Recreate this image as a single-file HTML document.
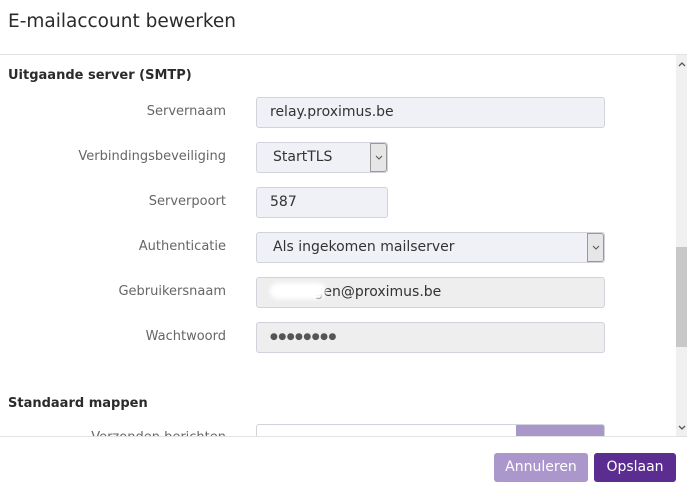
<!DOCTYPE html>
<html><head><meta charset="utf-8"><style>
*{box-sizing:border-box;margin:0;padding:0}
body{width:687px;height:492px;overflow:hidden;background:#fff;font-family:"DejaVu Sans","Liberation Sans",sans-serif;color:#333;position:relative}
.abs{position:absolute}
h1{position:absolute;left:8px;top:11px;font-size:18.5px;font-weight:normal;color:#2b2b2b}
.hr{position:absolute;left:0;width:687px;height:1px;background:#e2e2e2}
.sec{position:absolute;left:8px;font-size:13px;font-weight:bold;color:#2b2b2b}
.lab{position:absolute;right:461px;font-size:13px;color:#666;text-align:right}
.inp{position:absolute;left:256px;height:31px;border:1px solid #d2d2dc;border-radius:3px;background:#f0f1f6;font-size:14px;color:#333;padding:6px 0 0 13px}
.gray{background:#eeeeee}
.sel{padding-left:16px}
.arr{position:absolute;right:0;top:0;width:17px;height:29px;background:#e6e6e6;border:1px solid #999;border-radius:0 3px 3px 0}
.arr svg{position:absolute;left:4px;top:11px}
.btn{position:absolute;top:453px;height:29px;color:#fff;font-size:14px;text-align:center;line-height:29px;border-radius:3px}
</style></head><body>
<h1>E-mailaccount bewerken</h1>
<div class="hr" style="top:54px"></div>
<div class="sec" style="top:68px">Uitgaande server (SMTP)</div>

<div class="lab" style="top:104px">Servernaam</div>
<div class="inp" style="top:97px;width:349px">relay.proximus.be</div>

<div class="lab" style="top:149px">Verbindingsbeveiliging</div>
<div class="inp sel" style="top:142px;width:132px">StartTLS<div class="arr"><svg width="8" height="5" viewBox="0 0 8 5"><path d="M1 1 L4 4 L7 1" fill="none" stroke="#555" stroke-width="1"/></svg></div></div>

<div class="lab" style="top:194px">Serverpoort</div>
<div class="inp" style="top:187px;width:132px">587</div>

<div class="lab" style="top:239px">Authenticatie</div>
<div class="inp sel" style="top:232px;width:349px">Als ingekomen mailserver<div class="arr"><svg width="8" height="5" viewBox="0 0 8 5"><path d="M1 1 L4 4 L7 1" fill="none" stroke="#555" stroke-width="1"/></svg></div></div>

<div class="lab" style="top:284px">Gebruikersnaam</div>
<div class="inp gray" style="top:277px;width:349px">&nbsp;&nbsp;&nbsp;&nbsp;&nbsp;&nbsp;&nbsp;&nbsp;&nbsp;&nbsp;gen@proximus.be<div class="abs" style="left:13px;top:5px;width:56px;height:16px;background:#fff;border-radius:8px;filter:blur(2px)"></div></div>

<div class="lab" style="top:329px">Wachtwoord</div>
<div class="inp gray" style="top:322px;width:349px;font-size:9px;padding-top:9px;letter-spacing:0.5px;color:#555">●●●●●●●●</div>

<div class="sec" style="top:396px">Standaard mappen</div>
<div class="lab" style="top:430px;overflow:hidden;height:6px">Verzonden berichten</div>
<div class="abs" style="left:256px;top:424px;width:349px;height:12px;overflow:hidden;border:1px solid #d2d2dc;border-bottom:none;border-radius:3px 3px 0 0;background:#fff"><div class="abs" style="right:0;top:0;width:88px;height:12px;background:#a997c9"></div></div>

<div class="abs" style="left:676px;top:55px;width:11px;height:381px;background:#f0f0f0"></div>
<div class="abs" style="left:676px;top:247px;width:11px;height:100px;background:#c8c8c8"></div>
<svg class="abs" style="left:678px;top:62px" width="8" height="5" viewBox="0 0 8 5"><path d="M1 4 L4 1 L7 4" fill="none" stroke="#555" stroke-width="1.3"/></svg>
<svg class="abs" style="left:678px;top:425px" width="8" height="5" viewBox="0 0 8 5"><path d="M1 1 L4 4 L7 1" fill="none" stroke="#555" stroke-width="1.3"/></svg>

<div class="hr" style="top:436px"></div>
<div class="btn" style="left:494px;width:94px;background:#ab97cb">Annuleren</div>
<div class="btn" style="left:594px;width:82px;background:#5c2d91">Opslaan</div>
</body></html>
